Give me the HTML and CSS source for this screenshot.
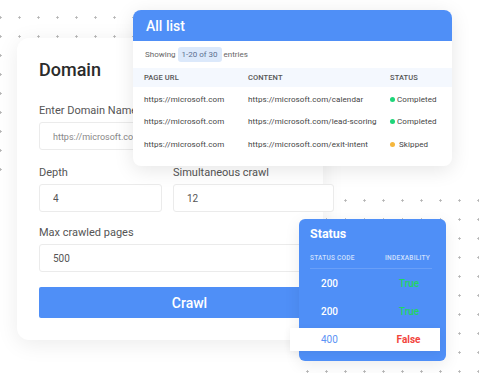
FILE: index.html
```html
<!DOCTYPE html>
<html>
	<head>
		<meta http-equiv="Content-Type" content="text/html; charset=UTF-8" />
		<title>Crawler</title>
		<link rel="stylesheet" href="styles.css">
	</head>
	<body>
		<div class="scene">
			<div class="dots dots-left"></div>
			<div class="dots dots-right"></div>

			<form class="domain-card">
				<h2 class="card-title">Domain</h2>
				<label class="field">
					<span class="field-label">Enter Domain Name</span>
					<input type="text" class="field-input" placeholder="https://microsoft.com">
				</label>
				<div class="field-pair">
					<label class="field">
						<span class="field-label">Depth</span>
						<input type="text" class="field-input" value="4">
					</label>
					<label class="field">
						<span class="field-label">Simultaneous crawl</span>
						<input type="text" class="field-input" value="12">
					</label>
				</div>
				<label class="field">
					<span class="field-label">Max crawled pages</span>
					<input type="text" class="field-input" value="500">
				</label>
				<button type="button" class="crawl-btn">Crawl</button>
			</form>

			<div class="list-card">
				<div class="list-head">All list</div>
				<div class="list-info">Showing <span class="badge">1-20 of 30</span> entries</div>
				<div class="list-row list-row-head">
					<span>PAGE URL</span>
					<span>CONTENT</span>
					<span>STATUS</span>
				</div>
				<div class="list-row">
					<span>https://microsoft.com</span>
					<span>https://microsoft.com/calendar</span>
					<span class="state state-ok">Completed</span>
				</div>
				<div class="list-row">
					<span>https://microsoft.com</span>
					<span>https://microsoft.com/lead-scoring</span>
					<span class="state state-ok">Completed</span>
				</div>
				<div class="list-row">
					<span>https://microsoft.com</span>
					<span>https://microsoft.com/exit-intent</span>
					<span class="state state-skip">Skipped</span>
				</div>
			</div>

			<div class="status-card">
				<div class="status-title">Status</div>
				<div class="status-row status-row-head">
					<span>STATUS CODE</span>
					<span>INDEXABILITY</span>
				</div>
				<div class="status-row">
					<span class="code">200</span>
					<span class="idx-true">True</span>
				</div>
				<div class="status-row">
					<span class="code">200</span>
					<span class="idx-true">True</span>
				</div>
				<div class="status-row status-row-hl">
					<span class="code">400</span>
					<span class="idx-false">False</span>
				</div>
			</div>
		</div>
	</body>
</html>
```

FILE: styles.css
```css
body {
	margin: 0;
	background-color: white;
	font-family: Roboto, "Liberation Sans", sans-serif;
	overflow: hidden;
}
.scene {
	position: relative;
	width: 479px;
	height: 373px;
	overflow: hidden;
}

/* dotted backdrops */
.dots {
	position: absolute;
	background-image: radial-gradient(circle, #b4b4b4 0.9px, transparent 1.4px);
	background-size: 19px 19px;
}
.dots-left  { left: -9.5px; top: 8px;   width: 152px; height: 171px; }
.dots-right { left: 297.5px; top: 190.5px; width: 190px; height: 190px; }

/* domain form */
.domain-card {
	position: absolute;
	left: 17px; top: 38px;
	width: 306px;
	box-sizing: border-box;
	padding: 21px 11px 22px 22px;
	background-color: white;
	border-radius: 12px;
	box-shadow: 0 4px 22px rgba(0, 0, 0, 0.08);
}
.card-title {
	margin: 0;
	font-size: 18px;
	line-height: 22px;
	font-weight: 500;
	color: #2b2b2b;
}
.field {
	display: flex;
	flex-direction: column;
	gap: 3px;
	margin-top: 15px;
}
.card-title + .field { margin-top: 22px; }
.field-pair + .field { margin-top: 13px; }
.field-label {
	font-size: 11px;
	line-height: 16px;
	color: #555;
}
.field-input {
	height: 28px;
	box-sizing: border-box;
	padding: 0 13px;
	border: 1px solid #ebebeb;
	border-radius: 3px;
	font: 10px Roboto, "Liberation Sans", sans-serif;
	color: #555;
	outline: none;
}
.field-input::placeholder { color: #888; font-size: 9px; }
.field-pair {
	display: grid;
	grid-template-columns: 123px 1fr;
	gap: 11px;
}
.crawl-btn {
	display: block;
	width: 100%;
	height: 31px;
	margin-top: 15px;
	padding: 0 0 0 28px;
	border: 0;
	border-radius: 2px;
	background-color: #4f8ff7;
	color: white;
	font: 500 14px Roboto, "Liberation Sans", sans-serif;
}

/* all list table */
.list-card {
	position: absolute;
	left: 133px; top: 10px;
	width: 319px; height: 156px;
	background-color: white;
	border-radius: 8px;
	overflow: hidden;
	box-shadow: 0 4px 20px rgba(0, 0, 0, 0.10);
}
.list-head {
	height: 31px;
	padding: 0 13px;
	background-color: #4f8ff7;
	color: white;
	font-size: 14px;
	font-weight: 500;
	line-height: 32px;
}
.list-info {
	padding: 6px 12px 6px;
	font-size: 8px;
	line-height: 15px;
	color: #666;
}
.badge {
	display: inline-block;
	padding: 0 4px;
	border-radius: 3px;
	background-color: #dce9fb;
	color: #5b6e8f;
}
.list-row {
	display: grid;
	grid-template-columns: 104px 142px 1fr;
	align-items: center;
	height: 22.5px;
	padding: 0 11px;
	font-size: 8px;
	color: #444;
	letter-spacing: 0.1px;
}
.list-row-head {
	height: 19px;
	margin-bottom: 1px;
	background-color: #f4f8fe;
	font-size: 7.5px;
	font-weight: 500;
	color: #555;
}
.state { display: flex; align-items: center; gap: 2px; }
.state:before {
	content: "";
	width: 5px; height: 5px;
	border-radius: 50%;
}
.state-ok:before   { background-color: #1ed57a; }
.state-skip        { gap: 4px; }
.state-skip:before { background-color: #f6b73c; }

/* status panel */
.status-card {
	position: absolute;
	left: 299px; top: 219px;
	width: 147px; height: 142px;
	box-sizing: border-box;
	padding: 7px 14px 0 11px;
	background-color: #4f8ff7;
	border-radius: 6px;
	box-shadow: 0 4px 16px rgba(0, 0, 0, 0.08);
}
.status-title {
	font-size: 12.5px;
	line-height: 16px;
	font-weight: 700;
	color: white;
}
.status-row {
	display: grid;
	grid-template-columns: 73px 1fr;
	align-items: center;
	height: 28px;
	font-size: 10px;
	font-weight: 500;
}
.status-row > :last-child { text-align: center; }
.status-row-head {
	height: 16px;
	margin-top: 8px;
	padding-bottom: 2px;
	border-bottom: 1px solid rgba(255, 255, 255, 0.15);
	font-size: 6.5px;
	color: #cfe0fd;
	letter-spacing: 0.25px;
}
.status-row-head + .status-row { margin-top: 0; }
.code { padding-left: 11px; color: white; }
.idx-true  { color: #22d561; padding-left: 3px; }
.status-row-hl {
	height: 23px;
	margin: 3px -8px 0 -20px;
	padding-left: 20px;
	grid-template-columns: 73px 1fr;
	background-color: white;
	box-shadow: 0 2px 8px rgba(0, 0, 0, 0.06);
}
.status-row-hl .code { color: #5b93f5; font-weight: 400; }
.status-row-hl > :last-child { padding-right: 6px; }
.idx-false { color: #f2453d; font-weight: 700; }
```
